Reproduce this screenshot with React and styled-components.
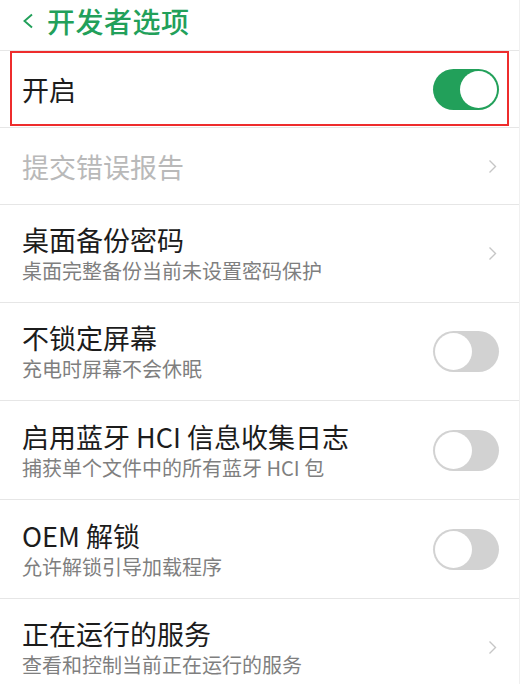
import React from 'react'
import styled, { createGlobalStyle } from 'styled-components'

const GlobalStyle = createGlobalStyle`
  body {
    margin: 0;
    background: #ffffff;
    font-family: "Noto Sans CJK SC", "Noto Sans", sans-serif;
  }
`

const Page = styled.div`
  width: 520px;
  height: 684px;
  overflow: hidden;
  background: #fff;
  border-right: 1px solid #f0f0f0;
  box-sizing: border-box;
`

const Header = styled.div`
  height: 51px;
  display: flex;
  align-items: center;
  padding: 0 0 9px 22px;
  box-sizing: border-box;
  border-bottom: 1px solid #e6e6e6;
  color: #22a05a;
`

const Back = styled.svg`
  width: 12px;
  height: 16px;
  margin-right: 13px;
`

const Title = styled.h1`
  margin: 0;
  font-size: 28px;
  font-weight: 500;
  letter-spacing: 0.5px;
`

const Row = styled.div`
  position: relative;
  display: flex;
  align-items: center;
  height: ${p => (p.$sub ? (p.$tall ? 98 : 97) : 76)}px;
  padding: 0 20px 0 22px;
  border-bottom: 1px solid #e6e6e6;

  ${p => p.$marked && `
    &::after {
      content: '';
      position: absolute;
      left: 10px;
      right: 10px;
      top: 0;
      bottom: 1px;
      border: 2.5px solid #ee2c2c;
    }
  `}
`

const Texts = styled.div`
  flex: 1;
  display: flex;
  flex-direction: column;
`

const Label = styled.div`
  font-size: 27px;
  line-height: 33px;
  color: ${p => (p.$disabled ? '#b9b9b9' : '#1c1c1c')};
`

const Sub = styled.div`
  margin-top: 2px;
  font-size: 20px;
  line-height: 26px;
  color: #7f7f7f;
`

const Track = styled.div`
  width: 66px;
  height: 41px;
  border-radius: 21px;
  background: ${p => (p.$on ? '#22a05a' : '#d2d2d2')};
  display: flex;
  justify-content: ${p => (p.$on ? 'flex-end' : 'flex-start')};
  align-items: center;
  padding: 2px;
  box-sizing: border-box;
`

const Thumb = styled.div`
  width: 37px;
  height: 37px;
  border-radius: 50%;
  background: #fff;
`

const Chevron = styled.svg`
  width: 9px;
  height: 15px;
  margin-right: 2px;
`

const Toggle = ({ on }) => (
  <Track $on={on}>
    <Thumb />
  </Track>
)

const Arrow = () => (
  <Chevron viewBox="0 0 9 15">
    <path d="M1.5 1.5 L7.5 7.5 L1.5 13.5" fill="none" stroke="#c6c6c6" strokeWidth="1.4" />
  </Chevron>
)

const items = [
  { label: '提交错误报告', disabled: true, action: 'arrow' },
  { label: '桌面备份密码', sub: '桌面完整备份当前未设置密码保护', action: 'arrow' },
  { label: '不锁定屏幕', sub: '充电时屏幕不会休眠', action: 'toggle' },
  { label: '启用蓝牙 HCI 信息收集日志', sub: '捕获单个文件中的所有蓝牙 HCI 包', action: 'toggle', tall: true },
  { label: 'OEM 解锁', sub: '允许解锁引导加载程序', action: 'toggle', tall: true },
  { label: '正在运行的服务', sub: '查看和控制当前正在运行的服务', action: 'arrow' },
]

export default function App() {
  return (
    <Page>
      <GlobalStyle />
      <Header>
        <Back viewBox="0 0 12 16">
          <path d="M10 1.5 L2.5 8 L10 14.5" fill="none" stroke="#22a05a" strokeWidth="1.9" />
        </Back>
        <Title>开发者选项</Title>
      </Header>
      <Row $marked>
        <Texts>
          <Label>开启</Label>
        </Texts>
        <Toggle on />
      </Row>
      {items.map(item => (
        <Row key={item.label} $sub={!!item.sub} $tall={item.tall}>
          <Texts>
            <Label $disabled={item.disabled}>{item.label}</Label>
            {item.sub && <Sub>{item.sub}</Sub>}
          </Texts>
          {item.action === 'toggle' ? <Toggle /> : <Arrow />}
        </Row>
      ))}
    </Page>
  )
}
